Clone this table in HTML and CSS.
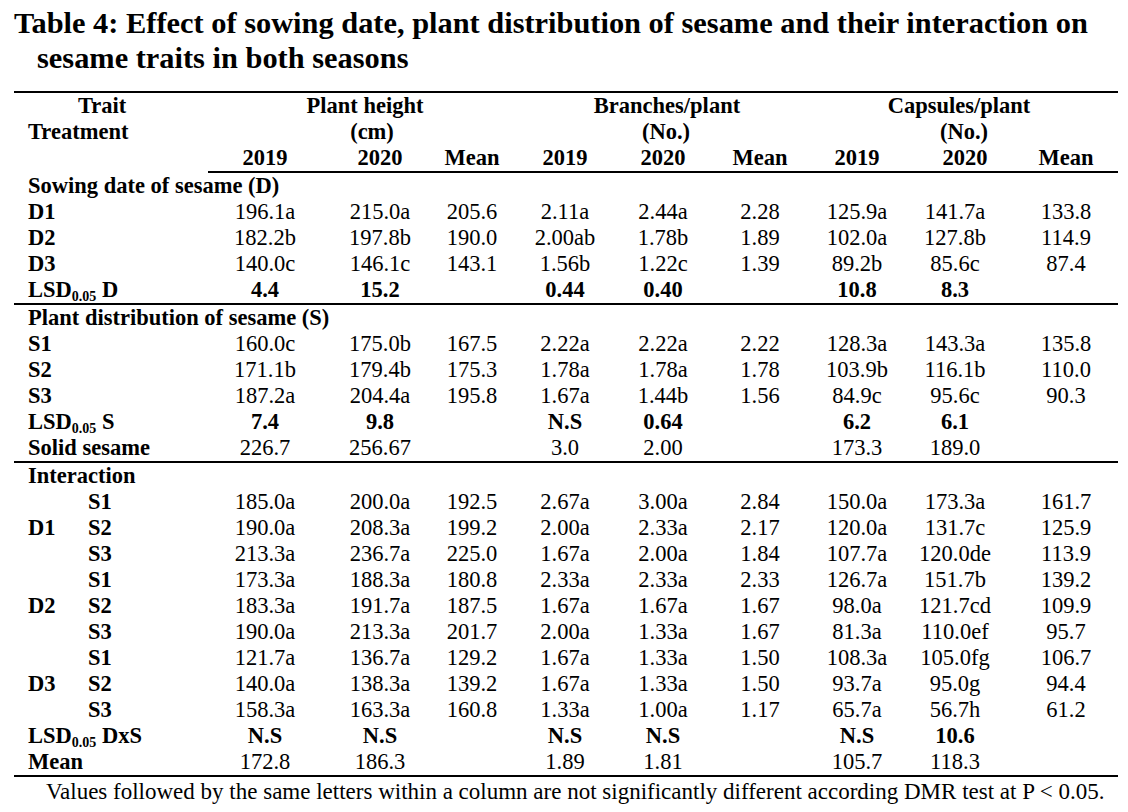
FILE: index.html
```html
<!DOCTYPE html>
<html lang="en">
<head>
<meta charset="utf-8">
<title>Table 4</title>
<link rel="stylesheet" href="styles.css">
</head>
<body>
<div class="page">
  <h1 class="caption">Table 4: Effect of sowing date, plant distribution of sesame and their interaction on<br>sesame traits in both seasons</h1>
  <table class="data">
    <colgroup>
      <col class="c-label">
      <col class="c1"><col class="c2"><col class="c3">
      <col class="c4"><col class="c5"><col class="c6">
      <col class="c7"><col class="c8"><col class="c9">
    </colgroup>
    <thead>
      <tr class="h1">
        <th class="trait">Trait</th>
        <th colspan="3" class="grp g-ph">Plant height</th>
        <th colspan="3" class="grp g-br">Branches/plant</th>
        <th colspan="3" class="grp g-cp">Capsules/plant</th>
      </tr>
      <tr class="h2">
        <th class="treat">Treatment</th>
        <th colspan="3" class="grp g-ph2">(cm)</th>
        <th colspan="3" class="grp g-br2">(No.)</th>
        <th colspan="3" class="grp g-cp2">(No.)</th>
      </tr>
      <tr class="h3">
        <th class="blank"></th>
        <th class="yr">2019</th><th class="yr">2020</th><th class="yr">Mean</th>
        <th class="yr">2019</th><th class="yr">2020</th><th class="yr">Mean</th>
        <th class="yr">2019</th><th class="yr yr-cp">2020</th><th class="yr">Mean</th>
      </tr>
    </thead>
    <tbody>
      <tr><td class="lab" colspan="10">Sowing date of sesame (D)</td></tr>
      <tr><td class="lab">D1</td><td>196.1a</td><td>215.0a</td><td>205.6</td><td>2.11a</td><td>2.44a</td><td>2.28</td><td>125.9a</td><td>141.7a</td><td>133.8</td></tr>
      <tr><td class="lab">D2</td><td>182.2b</td><td>197.8b</td><td>190.0</td><td>2.00ab</td><td>1.78b</td><td>1.89</td><td>102.0a</td><td>127.8b</td><td>114.9</td></tr>
      <tr><td class="lab">D3</td><td>140.0c</td><td>146.1c</td><td>143.1</td><td>1.56b</td><td>1.22c</td><td>1.39</td><td>89.2b</td><td>85.6c</td><td>87.4</td></tr>
      <tr class="lsd"><td class="lab">LSD<sub>0.05</sub> D</td><td>4.4</td><td>15.2</td><td></td><td>0.44</td><td>0.40</td><td></td><td>10.8</td><td>8.3</td><td></td></tr>

      <tr class="sect"><td class="lab" colspan="10">Plant distribution of sesame (S)</td></tr>
      <tr><td class="lab">S1</td><td>160.0c</td><td>175.0b</td><td>167.5</td><td>2.22a</td><td>2.22a</td><td>2.22</td><td>128.3a</td><td>143.3a</td><td>135.8</td></tr>
      <tr><td class="lab">S2</td><td>171.1b</td><td>179.4b</td><td>175.3</td><td>1.78a</td><td>1.78a</td><td>1.78</td><td>103.9b</td><td>116.1b</td><td>110.0</td></tr>
      <tr><td class="lab">S3</td><td>187.2a</td><td>204.4a</td><td>195.8</td><td>1.67a</td><td>1.44b</td><td>1.56</td><td>84.9c</td><td>95.6c</td><td>90.3</td></tr>
      <tr class="lsd"><td class="lab">LSD<sub>0.05</sub> S</td><td>7.4</td><td>9.8</td><td></td><td>N.S</td><td>0.64</td><td></td><td>6.2</td><td>6.1</td><td></td></tr>
      <tr><td class="lab">Solid sesame</td><td>226.7</td><td>256.67</td><td></td><td>3.0</td><td>2.00</td><td></td><td>173.3</td><td>189.0</td><td></td></tr>

      <tr class="sect"><td class="lab" colspan="10">Interaction</td></tr>
      <tr><td class="lab"><span class="dl"></span>S1</td><td>185.0a</td><td>200.0a</td><td>192.5</td><td>2.67a</td><td>3.00a</td><td>2.84</td><td>150.0a</td><td>173.3a</td><td>161.7</td></tr>
      <tr><td class="lab"><span class="dl">D1</span>S2</td><td>190.0a</td><td>208.3a</td><td>199.2</td><td>2.00a</td><td>2.33a</td><td>2.17</td><td>120.0a</td><td>131.7c</td><td>125.9</td></tr>
      <tr><td class="lab"><span class="dl"></span>S3</td><td>213.3a</td><td>236.7a</td><td>225.0</td><td>1.67a</td><td>2.00a</td><td>1.84</td><td>107.7a</td><td>120.0de</td><td>113.9</td></tr>
      <tr><td class="lab"><span class="dl"></span>S1</td><td>173.3a</td><td>188.3a</td><td>180.8</td><td>2.33a</td><td>2.33a</td><td>2.33</td><td>126.7a</td><td>151.7b</td><td>139.2</td></tr>
      <tr><td class="lab"><span class="dl">D2</span>S2</td><td>183.3a</td><td>191.7a</td><td>187.5</td><td>1.67a</td><td>1.67a</td><td>1.67</td><td>98.0a</td><td>121.7cd</td><td>109.9</td></tr>
      <tr><td class="lab"><span class="dl"></span>S3</td><td>190.0a</td><td>213.3a</td><td>201.7</td><td>2.00a</td><td>1.33a</td><td>1.67</td><td>81.3a</td><td>110.0ef</td><td>95.7</td></tr>
      <tr><td class="lab"><span class="dl"></span>S1</td><td>121.7a</td><td>136.7a</td><td>129.2</td><td>1.67a</td><td>1.33a</td><td>1.50</td><td>108.3a</td><td>105.0fg</td><td>106.7</td></tr>
      <tr><td class="lab"><span class="dl">D3</span>S2</td><td>140.0a</td><td>138.3a</td><td>139.2</td><td>1.67a</td><td>1.33a</td><td>1.50</td><td>93.7a</td><td>95.0g</td><td>94.4</td></tr>
      <tr><td class="lab"><span class="dl"></span>S3</td><td>158.3a</td><td>163.3a</td><td>160.8</td><td>1.33a</td><td>1.00a</td><td>1.17</td><td>65.7a</td><td>56.7h</td><td>61.2</td></tr>
      <tr class="lsd"><td class="lab">LSD<sub>0.05</sub> DxS</td><td>N.S</td><td>N.S</td><td></td><td>N.S</td><td>N.S</td><td></td><td>N.S</td><td>10.6</td><td></td></tr>
      <tr class="last"><td class="lab">Mean</td><td>172.8</td><td>186.3</td><td></td><td>1.89</td><td>1.81</td><td></td><td>105.7</td><td>118.3</td><td></td></tr>
    </tbody>
  </table>
  <p class="note">Values followed by the same letters within a column are not significantly different according DMR test at P &lt; 0.05.</p>
</div>
</body>
</html>
```
FILE: styles.css
```css
html, body {
  margin: 0;
  padding: 0;
  background: #fff;
}
body {
  font-family: "Liberation Serif", "Times New Roman", serif;
  color: #000;
}
.page {
  width: 1128px;
  height: 812px;
  overflow: hidden;
  padding: 6px 10px 0 14px;
  box-sizing: border-box;
}
.caption {
  margin: 0 0 15px 0;
  font-size: 30.4px;
  line-height: 35px;
  font-weight: bold;
  padding-left: 23px;
  text-indent: -23px;
  white-space: nowrap;
}
.data {
  width: 1104px;
  table-layout: fixed;
  border-collapse: collapse;
  font-size: 22.5px;
  line-height: 26px;
  border-top: 2px solid #000;
}
.c-label { width: 194px; }
.c1 { width: 114px; }
.c2 { width: 116px; }
.c3 { width: 68px; }
.c4 { width: 118px; }
.c5 { width: 78px; }
.c6 { width: 116px; }
.c7 { width: 78px; }
.c8 { width: 118px; }
.c9 { width: 104px; }
.data th, .data td {
  padding: 0;
  white-space: nowrap;
  text-align: center;
}
.data th { font-weight: bold; }
.data th.trait { text-align: left; padding-left: 64px; }
.data th.treat { text-align: left; padding-left: 14px; }
.data th.g-ph { padding-left: 16px; }
.data th.g-ph2 { padding-left: 30px; }
.data th.g-br { padding-left: 10px; }
.data th.g-br2 { padding-left: 8px; }
.data th.g-cp { padding-right: 18px; }
.data th.g-cp2 { padding-right: 8px; }
.data th.yr { border-bottom: 2px solid #000; }
.data th.yr-cp { padding-left: 20px; }
.data td.lab {
  text-align: left;
  padding-left: 14px;
  font-weight: bold;
}
.dl {
  display: inline-block;
  width: 60px;
}
.lsd td { font-weight: bold; }
.sect td { border-top: 2px solid #000; }
.last td { border-bottom: 2px solid #000; }
sub {
  font-size: 14px;
  line-height: 0;
  vertical-align: -4px;
}
.note {
  margin: 3px 0 0 0;
  padding-left: 32px;
  font-size: 23px;
  line-height: 24px;
}
```
